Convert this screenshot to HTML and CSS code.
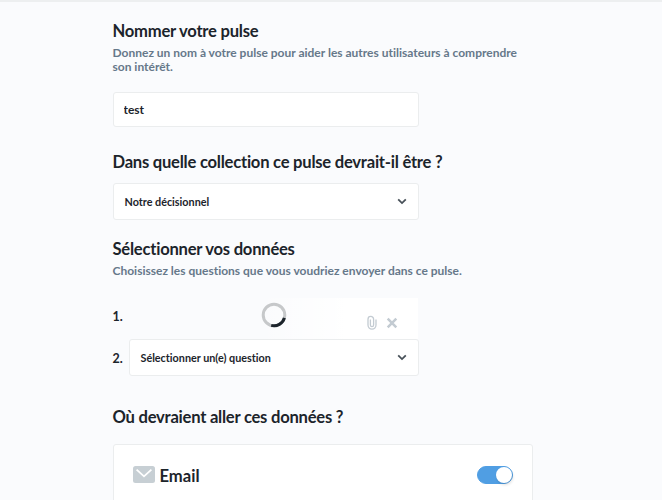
FILE: index.html
```html
<!DOCTYPE html>
<html lang="fr">
<head>
    <meta charset="utf-8">
    <title>Nouveau pulse</title>
    <link rel="stylesheet" href="styles.css">
</head>
<body>
<div class="page">
    <div class="section section-name">
        <h2 class="title">Nommer votre pulse</h2>
        <p class="description">Donnez un nom à votre pulse pour aider les autres utilisateurs à comprendre son intérêt.</p>
        <input class="name-input" type="text" value="test">
    </div>

    <div class="section section-collection">
        <h2 class="title">Dans quelle collection ce pulse devrait-il être ?</h2>
        <div class="select">
            <span>Notre décisionnel</span>
            <svg class="chevron" viewBox="0 0 10 7"><path d="M1.2 1.3 5 5.1 8.8 1.3"/></svg>
        </div>
    </div>

    <div class="section section-data">
        <h2 class="title">Sélectionner vos données</h2>
        <p class="description">Choisissez les questions que vous voudriez envoyer dans ce pulse.</p>
        <ol class="cards">
            <li class="card card-loading">
                <span class="number">1.</span>
                <div class="preview">
                    <svg class="spinner" viewBox="0 0 26 26">
                        <circle class="track" cx="13" cy="13" r="10.8"/>
                        <path class="arc" d="M23.4 15.9A10.8 10.8 0 0 1 10.2 23.4"/>
                    </svg>
                    <div class="actions">
                        <svg class="clip" viewBox="0 0 10 15"><path d="M3.4 4.6v5.5a1.6 1.6 0 0 0 3.2 0V4.2a2.2 2.2 0 0 0-5.6 0v5.9a3.9 3.9 0 0 0 8 0V4.4"/></svg>
                        <svg class="close" viewBox="0 0 12 12"><path d="M1.7 1.7l8.6 8.6M10.3 1.7 1.7 10.3"/></svg>
                    </div>
                </div>
            </li>
            <li class="card">
                <span class="number">2.</span>
                <div class="select">
                    <span>Sélectionner un(e) question</span>
                    <svg class="chevron" viewBox="0 0 10 7"><path d="M1.2 1.3 5 5.1 8.8 1.3"/></svg>
                </div>
            </li>
        </ol>
    </div>

    <div class="section section-channels">
        <h2 class="title">Où devraient aller ces données ?</h2>
        <div class="channel">
            <svg class="mail" viewBox="0 0 22 17"><rect width="22" height="17" rx="2.5"/><path d="M3.6 3.6 11 10.3l7.4-6.7"/></svg>
            <h3 class="channel-name">Email</h3>
            <div class="toggle"><div class="knob"></div></div>
        </div>
    </div>
</div>
</body>
</html>
```
FILE: styles.css
```css
* {
    box-sizing: border-box;
}

body {
    margin: 0;
    height: 500px;
    overflow: hidden;
    background-color: #fafbfd;
    color: #1c242b;
    font-family: Lato, "Liberation Sans", sans-serif;
    font-weight: 700;
    font-variant-ligatures: none;
}

.page {
    height: 500px;
    padding: 19px 0 0 112.5px;
    border-top: 2px solid #edeff0;
    overflow: hidden;
}

.title {
    margin: 0;
    font-size: 16.6px;
    line-height: 20px;
    font-weight: 700;
    letter-spacing: -0.24px;
}

.description {
    width: 421px;
    margin: 5px 0 0;
    color: #66788a;
    font-size: 12px;
    line-height: 14px;
}

.name-input {
    display: block;
    width: 306px;
    height: 35px;
    margin: 18px 0 0;
    padding: 0 10px;
    border: 1px solid #ebedee;
    border-radius: 3px;
    background-color: #fff;
    color: inherit;
    font: inherit;
    font-size: 12px;
    outline: none;
}

.section-collection {
    margin-top: 25px;
}

.section-data {
    margin-top: 19px;
}

.section-channels {
    margin-top: 31px;
}

.select {
    display: flex;
    align-items: center;
    justify-content: space-between;
    flex: 1;
    height: 37px;
    padding: 0 11px;
    border: 1px solid #ebedee;
    border-radius: 3px;
    background-color: #fff;
    font-size: 10.8px;
}

.section-collection .select {
    width: 306px;
    margin-top: 11px;
}

.chevron {
    width: 10px;
    height: 7px;
    fill: none;
    stroke: #485159;
    stroke-width: 1.8;
}

.cards {
    width: 306px;
    margin: 20px 0 0;
    padding: 0;
    list-style: none;
}

.card {
    display: flex;
    align-items: center;
}

.number {
    width: 16px;
    padding-top: 2px;
    font-size: 12.5px;
}

.card-loading .number {
    padding: 0 0 4px;
}

.preview {
    display: flex;
    flex: 1;
    justify-content: space-between;
    height: 41px;
    margin-right: 1px;
    padding: 4px 20px 0 132px;
    background: linear-gradient(to right, rgba(255, 255, 255, 0) 45%, #fff 75%);
}

.spinner {
    width: 26px;
    height: 26px;
    fill: none;
    stroke-width: 3;
}

.track {
    stroke: #c6c8ca;
}

.arc {
    stroke: #1c242b;
}

.actions {
    display: flex;
    align-items: center;
    gap: 9px;
    height: 15px;
    margin-top: 13px;
    fill: none;
    stroke: #c3cbd2;
}

.clip {
    width: 10px;
    height: 15px;
    stroke-width: 1.3;
}

.close {
    width: 12px;
    height: 12px;
    stroke-width: 2.5;
}

.channel {
    display: flex;
    align-items: center;
    width: 420.5px;
    height: 75px;
    margin-top: 17px;
    padding: 0 19px 14px;
    border: 1px solid #ebedee;
    border-radius: 3px;
    background-color: #fff;
}

.mail {
    width: 22px;
    height: 17px;
    fill: #c7cfd4;
}

.mail path {
    fill: none;
    stroke: #fff;
    stroke-width: 1.8;
}

.channel-name {
    flex: 1;
    margin: 2px 0 0 5px;
    font-size: 16.6px;
    line-height: 20px;
    font-weight: 700;
}

.toggle {
    display: flex;
    justify-content: flex-end;
    width: 36px;
    height: 18px;
    border: 1px solid #509ee3;
    border-radius: 9px;
    background-color: #509ee3;
}

.knob {
    width: 16px;
    height: 16px;
    border-radius: 50%;
    background-color: #fff;
    box-shadow: 1px 2px 3px rgba(0, 0, 0, 0.12);
}
```
